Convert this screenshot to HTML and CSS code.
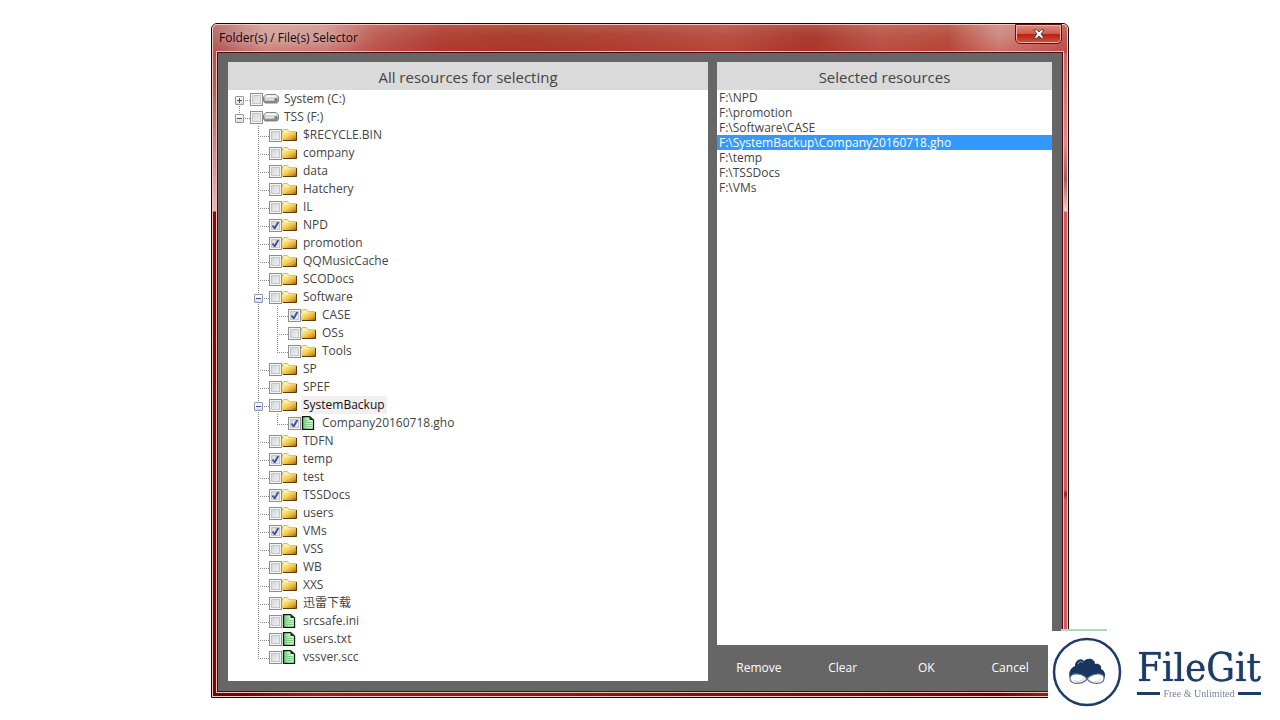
FILE: index.html
```html
<!DOCTYPE html>
<html lang="en">
<head>
<meta charset="utf-8">
<title>Folder(s) / File(s) Selector</title>
<link rel="stylesheet" href="styles.css">
</head>
<body>
<svg class="defs" aria-hidden="true">
  <defs>
    <linearGradient id="gold" x1="0" y1="0" x2="1" y2="1">
      <stop offset="0" stop-color="#fff6b0"/><stop offset=".45" stop-color="#f3cf5a"/><stop offset=".75" stop-color="#d9981c"/><stop offset="1" stop-color="#7a4a08"/>
    </linearGradient>
    <linearGradient id="steel" x1="0" y1="0" x2="0" y2="1">
      <stop offset="0" stop-color="#f4f4f4"/><stop offset=".5" stop-color="#b4b6b8"/><stop offset="1" stop-color="#77797b"/>
    </linearGradient>
    <linearGradient id="leaf" x1="0" y1="0" x2="1" y2="0">
      <stop offset="0" stop-color="#5fc46a"/><stop offset=".4" stop-color="#b4efb6"/><stop offset="1" stop-color="#e4fbe2"/>
    </linearGradient>
    <symbol id="folder" viewBox="0 0 16 14">
      <path d="M.5 12V3L1.500 1.500H5.500L7 3.500H13.500V5" fill="#fbf0a8" stroke="#c9b878"/>
      <path d="M0 12.500V5H6.500L8 3.500H15V12.500Z" fill="url(#gold)"/>
      <path d="M1 12.500H14.500V4" fill="none" stroke="#5a3c0c"/>
    </symbol>
    <symbol id="drive" viewBox="0 0 16 14">
      <path d="M3 2.500H13L15.500 5V9L14 11H2L.5 9V5Z" fill="url(#steel)" stroke="#858585"/>
      <path d="M3.500 3.500H12.500L14 5.500H2Z" fill="#f6f6f6"/>
      <path d="M2 7.500H11" stroke="#e8e8e8" stroke-width="2"/>
      <path d="M12 6.500H14V8.500H12Z" fill="#3f8b48"/>
    </symbol>
    <symbol id="file" viewBox="0 0 16 14">
      <path d="M1.500 .5H8.500L12.500 4V13.500H1.500Z" fill="url(#leaf)" stroke="#0b1a0c" stroke-width="1.300"/>
      <path d="M8.500 .5V4H12.500Z" fill="#123a16"/>
      <path d="M3 4.500H7M3 6.500H11M3 8.500H11M3 10.500H11" stroke="#7fd086"/>
    </symbol>
  </defs>
</svg>

<main class="window">
  <header class="titlebar">
    <h1 class="title">Folder(s) / File(s) Selector</h1>
    <button class="close" type="button" aria-label="Close">
      <svg viewBox="0 0 12 10" class="close-icon"><path d="M.8.8H4L6 3L8 .8H11.200L8 5L11.200 9.200H8L6 7L4 9.200H.8L4 5Z" fill="#fff" stroke="#4b4550"/></svg>
    </button>
  </header>

  <div class="client">
    <section class="panel tree-panel">
      <h2 class="panel-title">All resources for selecting</h2>
      <ul class="tree">
        <li><div class="row"><button class="toggle plus" type="button" aria-label="Expand"></button><label><input type="checkbox"><svg class="icon"><use href="#drive"/></svg><span class="name">System (C:)</span></label></div></li>
        <li><div class="row"><button class="toggle" type="button" aria-label="Collapse"></button><label><input type="checkbox"><svg class="icon"><use href="#drive"/></svg><span class="name">TSS (F:)</span></label></div>
          <ul>
            <li><div class="row"><label><input type="checkbox"><svg class="icon"><use href="#folder"/></svg><span class="name">$RECYCLE.BIN</span></label></div></li>
            <li><div class="row"><label><input type="checkbox"><svg class="icon"><use href="#folder"/></svg><span class="name">company</span></label></div></li>
            <li><div class="row"><label><input type="checkbox"><svg class="icon"><use href="#folder"/></svg><span class="name">data</span></label></div></li>
            <li><div class="row"><label><input type="checkbox"><svg class="icon"><use href="#folder"/></svg><span class="name">Hatchery</span></label></div></li>
            <li><div class="row"><label><input type="checkbox"><svg class="icon"><use href="#folder"/></svg><span class="name">IL</span></label></div></li>
            <li><div class="row"><label><input type="checkbox" checked><svg class="icon"><use href="#folder"/></svg><span class="name">NPD</span></label></div></li>
            <li><div class="row"><label><input type="checkbox" checked><svg class="icon"><use href="#folder"/></svg><span class="name">promotion</span></label></div></li>
            <li><div class="row"><label><input type="checkbox"><svg class="icon"><use href="#folder"/></svg><span class="name">QQMusicCache</span></label></div></li>
            <li><div class="row"><label><input type="checkbox"><svg class="icon"><use href="#folder"/></svg><span class="name">SCODocs</span></label></div></li>
            <li><div class="row"><button class="toggle" type="button" aria-label="Collapse"></button><label><input type="checkbox"><svg class="icon"><use href="#folder"/></svg><span class="name">Software</span></label></div>
              <ul>
                <li><div class="row"><label><input type="checkbox" checked><svg class="icon"><use href="#folder"/></svg><span class="name">CASE</span></label></div></li>
                <li><div class="row"><label><input type="checkbox"><svg class="icon"><use href="#folder"/></svg><span class="name">OSs</span></label></div></li>
                <li><div class="row"><label><input type="checkbox"><svg class="icon"><use href="#folder"/></svg><span class="name">Tools</span></label></div></li>
              </ul>
            </li>
            <li><div class="row"><label><input type="checkbox"><svg class="icon"><use href="#folder"/></svg><span class="name">SP</span></label></div></li>
            <li><div class="row"><label><input type="checkbox"><svg class="icon"><use href="#folder"/></svg><span class="name">SPEF</span></label></div></li>
            <li><div class="row"><button class="toggle" type="button" aria-label="Collapse"></button><label><input type="checkbox"><svg class="icon"><use href="#folder"/></svg><span class="name current">SystemBackup</span></label></div>
              <ul>
                <li><div class="row"><label><input type="checkbox" checked><svg class="icon"><use href="#file"/></svg><span class="name">Company20160718.gho</span></label></div></li>
              </ul>
            </li>
            <li><div class="row"><label><input type="checkbox"><svg class="icon"><use href="#folder"/></svg><span class="name">TDFN</span></label></div></li>
            <li><div class="row"><label><input type="checkbox" checked><svg class="icon"><use href="#folder"/></svg><span class="name">temp</span></label></div></li>
            <li><div class="row"><label><input type="checkbox"><svg class="icon"><use href="#folder"/></svg><span class="name">test</span></label></div></li>
            <li><div class="row"><label><input type="checkbox" checked><svg class="icon"><use href="#folder"/></svg><span class="name">TSSDocs</span></label></div></li>
            <li><div class="row"><label><input type="checkbox"><svg class="icon"><use href="#folder"/></svg><span class="name">users</span></label></div></li>
            <li><div class="row"><label><input type="checkbox" checked><svg class="icon"><use href="#folder"/></svg><span class="name">VMs</span></label></div></li>
            <li><div class="row"><label><input type="checkbox"><svg class="icon"><use href="#folder"/></svg><span class="name">VSS</span></label></div></li>
            <li><div class="row"><label><input type="checkbox"><svg class="icon"><use href="#folder"/></svg><span class="name">WB</span></label></div></li>
            <li><div class="row"><label><input type="checkbox"><svg class="icon"><use href="#folder"/></svg><span class="name">XXS</span></label></div></li>
            <li><div class="row"><label><input type="checkbox"><svg class="icon"><use href="#folder"/></svg><span class="name" lang="zh-CN">迅雷下载</span></label></div></li>
            <li><div class="row"><label><input type="checkbox"><svg class="icon"><use href="#file"/></svg><span class="name">srcsafe.ini</span></label></div></li>
            <li><div class="row"><label><input type="checkbox"><svg class="icon"><use href="#file"/></svg><span class="name">users.txt</span></label></div></li>
            <li><div class="row"><label><input type="checkbox"><svg class="icon"><use href="#file"/></svg><span class="name">vssver.scc</span></label></div></li>
          </ul>
        </li>
      </ul>
    </section>

    <div class="side">
      <section class="panel selected-panel">
        <h2 class="panel-title">Selected resources</h2>
        <ul class="selected-list" role="listbox" aria-label="Selected resources">
          <li role="option">F:\NPD</li>
          <li role="option">F:\promotion</li>
          <li role="option">F:\Software\CASE</li>
          <li role="option" aria-selected="true">F:\SystemBackup\Company20160718.gho</li>
          <li role="option">F:\temp</li>
          <li role="option">F:\TSSDocs</li>
          <li role="option">F:\VMs</li>
        </ul>
      </section>
      <div class="actions">
        <button type="button">Remove</button>
        <button type="button">Clear</button>
        <button type="button">OK</button>
        <button type="button">Cancel</button>
      </div>
    </div>
  </div>
</main>

<aside class="brand">
  <svg class="emblem" viewBox="0 0 70 70" aria-hidden="true">
    <circle cx="35" cy="35" r="33" fill="#fff" stroke="#1d3c66" stroke-width="2.500"/>
    <path d="M18 42C16 36 18 31 23 29C23 24 28 20 32 24C36 20 43 22 43 27C47 26 50 29 49 32C53 34 54 38 52 42Z" fill="#173660"/>
    <path d="M26 27C27 24 30 24 31 26" fill="none" stroke="#8fa3bd"/>
    <path d="M35 42C31 36 19 35 18 41C18 48 30 48 35 42C40 36 52 35 52 41C52 48 40 48 35 42Z" fill="#fff" stroke="#5d7390" stroke-width="1.200"/>
    <path d="M22 43C25 46 30 44 33 41M37 43C41 46 46 46 49 42" fill="none" stroke="#c3ccd6"/>
  </svg>
  <div class="wordmark">
    <strong class="brand-name">FileGit</strong>
    <span class="tagline">Free &amp; Unlimited</span>
  </div>
</aside>
</body>
</html>
```

FILE: styles.css
```css
* { box-sizing: border-box; }

body {
  margin: 0;
  min-height: 100vh;
  background: #fff;
  color: #444;
  font: 12px/18px "Open Sans", "Noto Sans", "Noto Sans CJK SC", sans-serif;
}

h1, h2, ul { margin: 0; padding: 0; font-weight: 400; }
ul { list-style: none; }
button { font: inherit; padding: 0; border: 0; }
.defs { position: absolute; width: 0; height: 0; }

/* Window frame */
.window {
  margin: 23px 211px 0;
  padding: 0 6px 6px;
  border: 1px solid #170304;
  border-radius: 6px 6px 0 0;
  box-shadow: inset 0 0 0 1px #f3c9c0;
  background:
    linear-gradient(90deg, #700508, #700508 4%, #9c1d1b 12%, #7e0c0d 70%, #6d0307 92%, #a52527) left bottom / 100% 6px no-repeat,
    linear-gradient(#b84a46, #a8605c 60px, #e2bcb8 187px, #86070b 188px, #7a0508) left top / 50% 100% no-repeat,
    linear-gradient(#c85a58, #e48886 120px, #a05a58 155px, #f0d4d0 187px, #d55a5c 188px, #d55a5c 466px, #8a2428 470px, #d55a5c 476px) right top / 50% 100% no-repeat;
}

.titlebar {
  display: flex;
  justify-content: space-between;
  height: 29px;
  margin: 0 -6px;
  padding: 0 5px 0 6px;
  border-radius: 5px 5px 0 0;
  border: solid #f3c9c0;
  border-width: 1px 1px 0;
  background:
    linear-gradient(rgba(255,255,255,.1), rgba(255,255,255,0) 40%, rgba(190,20,20,.25)),
    linear-gradient(90deg, #b06864, #d4a09a 6%, #d09690 13%, #bd5f57 19%, #b04236 27%, #a8402c 36%, #b0473a 50%, #b85244 60%, #a83c30 70%, #bb5a4c 78%, #b8503f 86%, #cf8c82 92%, #c05a56);
}

.title {
  color: #160606;
  font-size: 12px;
  line-height: 26px;
  text-shadow: 0 0 8px rgba(255,255,255,.5);
}

.close {
  display: grid;
  place-items: center;
  width: 47px;
  height: 20px;
  margin-top: -1px;
  border: 1px solid #5b1413;
  border-radius: 0 0 5px 5px;
  box-shadow: inset 0 0 0 1px #f0b0a4;
  background: linear-gradient(#e08c80, #cf5c4c 48%, #b8200f 52%, #d2523c);
}
.close-icon { width: 12px; height: 10px; }

/* Client area */
.client {
  display: grid;
  grid-template-columns: 480fr 335fr;
  gap: 9px;
  padding: 9px 10px 0;
  background: #666;
  box-shadow: 0 0 0 1px #4a0c0e, 0 0 0 2px #f0c0b8;
}

.panel { background: #fff; }
.tree-panel { margin-bottom: 10px; padding-bottom: 15px; }
.side { display: flex; flex-direction: column; }
.selected-panel { flex: 1; }

.panel-title {
  background: #dadada;
  font-size: 15px;
  line-height: 30px;
  height: 28px;
  text-align: center;
}

/* Tree */
.tree li {
  background: repeating-linear-gradient(#888 0 1px, transparent 1px 2px) 11px 0 / 1px 100% no-repeat;
}
.tree li:last-child { background-size: 1px 11px; }
.tree > li:first-child { background-position: 11px 10px; }
.tree ul { margin-left: 19px; }

.row {
  display: flex;
  align-items: center;
  height: 18px;
  padding-left: 22px;
  background: repeating-linear-gradient(90deg, #888 0 1px, transparent 1px 2px) 11px 10px / 11px 1px no-repeat;
}

.toggle {
  width: 9px;
  height: 9px;
  margin: 3px 6px 0 -15px;
  border: 1px solid #8c9aa6;
  border-radius: 1px;
  background:
    linear-gradient(#3558a8, #3558a8) center / 5px 1px no-repeat,
    linear-gradient(#fff, #dcdcdc);
}
.toggle.plus {
  background:
    linear-gradient(#3558a8, #3558a8) center / 5px 1px no-repeat,
    linear-gradient(#3558a8, #3558a8) center / 1px 5px no-repeat,
    linear-gradient(#fff, #dcdcdc);
}

.row label { display: flex; align-items: center; height: 16px; }

.row input {
  appearance: none;
  width: 13px;
  height: 13px;
  margin: 0;
  border: 1px solid #8e8f8f;
  box-shadow: inset 0 0 0 1px #f4f4f4, inset 0 0 0 2px #c4c7ca;
  background: linear-gradient(135deg, #cdd0d4, #f6f6f6);
}
.row input:checked {
  background:
    url("data:image/svg+xml,%3Csvg xmlns='http://www.w3.org/2000/svg' viewBox='0 0 11 11'%3E%3Cpath d='M2.500 5.500L4.700 8.500L8.500 1.500' fill='none' stroke='%23424f9c' stroke-width='1.900'/%3E%3C/svg%3E") center / 11px 11px no-repeat,
    linear-gradient(135deg, #cdd0d4, #f6f6f6);
}

.icon { width: 16px; height: 14px; }
.name { margin-left: 3px; padding: 0 2px; }
.current { background: #f0f0f0; color: #111; }

/* Selected list */
.selected-list li { padding-left: 2px; line-height: 15px; }
.selected-list [aria-selected="true"] { background: #3399ff; color: #fff; }

.actions {
  display: grid;
  grid-template-columns: repeat(4, 1fr);
  height: 46px;
}
.actions button { background: none; color: #fff; }

/* Brand badge over the lower right corner */
.brand {
  position: fixed;
  right: 0;
  bottom: 0;
  display: flex;
  align-items: center;
  gap: 15px;
  width: 232px;
  height: 89px;
  padding: 0 19px 8px 4px;
  background: #fff;
  color: #1d3c66;
}
.brand::before {
  content: "";
  position: absolute;
  left: 13px;
  top: -2px;
  width: 46px;
  height: 2px;
  background: #a9d8c4;
}
.emblem { flex: none; width: 70px; height: 70px; }
.wordmark { flex: 1; }
.brand-name {
  display: block;
  font: 400 40px/44px "DejaVu Serif Condensed", "DejaVu Serif", serif;
  text-shadow: 0 0 1px #1d3c66;
  white-space: nowrap;
}
.tagline {
  display: flex;
  align-items: center;
  gap: 3px;
  color: #76849a;
  font: 10px/10px "Liberation Serif", serif;
  white-space: nowrap;
}
.tagline::before, .tagline::after {
  content: "";
  flex: 1;
  height: 3px;
  background: #1d3c66;
}
```
